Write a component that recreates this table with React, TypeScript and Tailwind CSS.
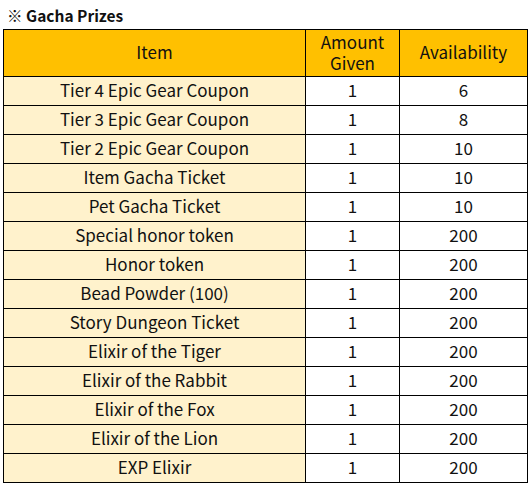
const rows: [string, string, string][] = [
  ["Tier 4 Epic Gear Coupon", "1", "6"],
  ["Tier 3 Epic Gear Coupon", "1", "8"],
  ["Tier 2 Epic Gear Coupon", "1", "10"],
  ["Item Gacha Ticket", "1", "10"],
  ["Pet Gacha Ticket", "1", "10"],
  ["Special honor token", "1", "200"],
  ["Honor token", "1", "200"],
  ["Bead Powder (100)", "1", "200"],
  ["Story Dungeon Ticket", "1", "200"],
  ["Elixir of the Tiger", "1", "200"],
  ["Elixir of the Rabbit", "1", "200"],
  ["Elixir of the Fox", "1", "200"],
  ["Elixir of the Lion", "1", "200"],
  ["EXP Elixir", "1", "200"],
];

export default function App() {
  return (
    <div className="w-[531px] h-[489px] bg-white text-[#111] font-['Noto_Sans_CJK_KR','Noto_Sans',sans-serif]">
      <div className="h-[29px] pl-[7px] pt-[4px] text-[15.5px] font-bold leading-[22px]">※ Gacha Prizes</div>
      <table className="ml-[3px] w-[525px] border-collapse table-fixed text-center text-[17px] leading-[22px]">
        <colgroup>
          <col className="w-[302px]" />
          <col className="w-[94px]" />
          <col className="w-[128px]" />
        </colgroup>
        <thead>
          <tr className="bg-[#ffc000] h-[47px]">
            <th className="border border-black font-normal p-0 pb-[2px]">Item</th>
            <th className="border border-black font-normal p-0 pb-[2px]">
              <div className="leading-[22px]">Amount</div>
              <div className="leading-[20px]">Given</div>
            </th>
            <th className="border border-black font-normal p-0 pb-[2px]">Availability</th>
          </tr>
        </thead>
        <tbody>
          {rows.map(([item, amount, avail]) => (
            <tr key={item} className="h-[29px]">
              <td className="border border-black bg-[#fff2cc] p-0 pb-[2px]">{item}</td>
              <td className="border border-black p-0 pb-[2px]">{amount}</td>
              <td className="border border-black p-0 pb-[2px]">{avail}</td>
            </tr>
          ))}
        </tbody>
      </table>
    </div>
  );
}
